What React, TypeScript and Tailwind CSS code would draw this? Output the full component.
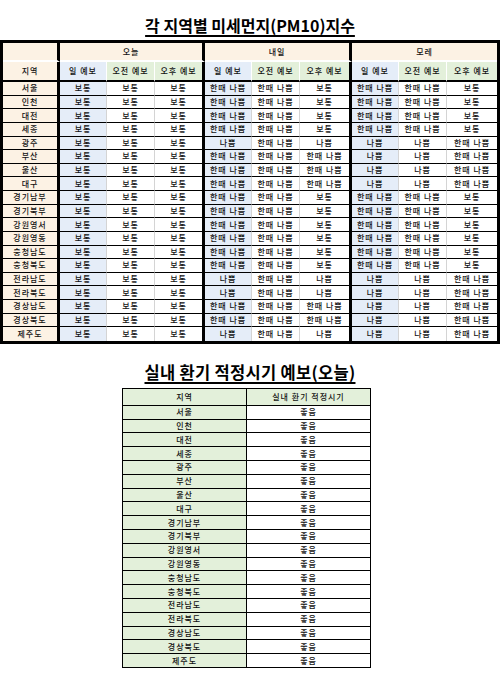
import React from "react";

const REGIONS = [
  "서울", "인천", "대전", "세종", "광주", "부산", "울산", "대구",
  "경기남부", "경기북부", "강원영서", "강원영동", "충청남도", "충청북도",
  "전라남도", "전라북도", "경상남도", "경상북도", "제주도",
];

const A = "한때 나쁨";
const B = "나쁨";
const N = "보통";

// 내일/모레 pattern: "north" type vs "south" type
const NORTH_TMR = [A, A, N];
const NORTH_DAT = [A, A, N];
const SOUTH_TMR = [B, A, B];
const EAST_TMR = [A, A, A];
const SOUTH_DAT = [B, B, A];

const FORECAST: Record<string, string[]> = {
  서울: [...NORTH_TMR, ...NORTH_DAT],
  인천: [...NORTH_TMR, ...NORTH_DAT],
  대전: [...NORTH_TMR, ...NORTH_DAT],
  세종: [...NORTH_TMR, ...NORTH_DAT],
  광주: [...SOUTH_TMR, ...SOUTH_DAT],
  부산: [...EAST_TMR, ...SOUTH_DAT],
  울산: [...EAST_TMR, ...SOUTH_DAT],
  대구: [...EAST_TMR, ...SOUTH_DAT],
  경기남부: [...NORTH_TMR, ...NORTH_DAT],
  경기북부: [...NORTH_TMR, ...NORTH_DAT],
  강원영서: [...NORTH_TMR, ...NORTH_DAT],
  강원영동: [...NORTH_TMR, ...NORTH_DAT],
  충청남도: [...NORTH_TMR, ...NORTH_DAT],
  충청북도: [...NORTH_TMR, ...NORTH_DAT],
  전라남도: [...SOUTH_TMR, ...SOUTH_DAT],
  전라북도: [...SOUTH_TMR, ...SOUTH_DAT],
  경상남도: [...EAST_TMR, ...SOUTH_DAT],
  경상북도: [...EAST_TMR, ...SOUTH_DAT],
  제주도: [...SOUTH_TMR, ...SOUTH_DAT],
};

const FONT = { fontFamily: '"Noto Sans CJK KR", "Noto Sans", sans-serif' };

// cell widths (border-box), sums to 494
const WIDTHS = ["w-[57px]", "w-[47px]", "w-[48px]", "w-[50px]", "w-[47px]", "w-[48px]", "w-[52px]", "w-[47px]", "w-[48px]", "w-[50px]"];

function DustTable() {
  const cell = "text-center align-middle p-0 whitespace-nowrap overflow-hidden";
  return (
    <table className="w-[500px] table-fixed border-separate border-spacing-0 border-[3px] border-black text-[8px] leading-none text-[#111] tracking-[1px]">
      <colgroup>
        {WIDTHS.map((w, i) => (
          <col key={i} className={w} />
        ))}
      </colgroup>
      <thead>
        <tr className="h-[19px]">
          <th className={`${cell} bg-[#fcf2e4] border-b-2 border-b-white border-r-[3px] border-r-black`} />
          {["오늘", "내일", "모레"].map((g, i) => (
            <th
              key={g}
              colSpan={3}
              className={`${cell} font-medium bg-[#fcf2e4] border-b-2 border-b-white ${i < 2 ? "border-r-[3px] border-r-black" : ""}`}
            >
              {g}
            </th>
          ))}
        </tr>
        <tr className="h-[20px]">
          <th className={`${cell} font-medium bg-[#fcf2e4] border-b-2 border-b-black border-r-[3px] border-r-black`}>지역</th>
          {[0, 1, 2].map((g) => (
            <React.Fragment key={g}>
              <th className={`${cell} font-medium bg-[#e5edf8] border-b-2 border-b-black border-r border-r-white`}>일 예보</th>
              <th className={`${cell} font-medium bg-[#e3f0da] border-b-2 border-b-black border-r border-r-white`}>오전 예보</th>
              <th
                className={`${cell} font-medium bg-[#e3f0da] border-b-2 border-b-black ${g < 2 ? "border-r-[3px] border-r-black" : ""}`}
              >
                오후 예보
              </th>
            </React.Fragment>
          ))}
        </tr>
      </thead>
      <tbody>
        {REGIONS.map((r, ri) => {
          const last = ri === REGIONS.length - 1;
          const bb = last ? "" : "border-b border-b-black";
          const vals = [N, N, N, ...FORECAST[r]];
          return (
            <tr key={r} className="h-[13.63px]">
              <td className={`${cell} font-medium bg-[#fcf2e4] ${bb} border-r-[3px] border-r-black`}>{r}</td>
              {vals.map((v, i) => {
                const pos = i % 3;
                const bg = pos === 0 ? "bg-[#e5edf8]" : "bg-white";
                const br =
                  pos === 2
                    ? i < 8
                      ? "border-r-[3px] border-r-black"
                      : ""
                    : "border-r border-r-[#d4d4d4]";
                return (
                  <td key={i} className={`${cell} font-medium ${bg} ${bb} ${br}`}>
                    {v}
                  </td>
                );
              })}
            </tr>
          );
        })}
      </tbody>
    </table>
  );
}

function VentTable() {
  const cell = "text-center align-middle p-0 whitespace-nowrap border-black";
  return (
    <table className="w-[248px] table-fixed border-collapse text-[8px] leading-none text-[#111] tracking-[1px]">
      <colgroup>
        <col className="w-[124px]" />
        <col className="w-[124px]" />
      </colgroup>
      <thead>
        <tr className="h-[17px]">
          <th className={`${cell} font-medium border border-black bg-[#e3f0da]`}>지역</th>
          <th className={`${cell} font-medium border border-black bg-[#e3f0da]`}>실내 환기 적정시기</th>
        </tr>
      </thead>
      <tbody>
        {REGIONS.map((r) => (
          <tr key={r} className="h-[13.8px]">
            <td className={`${cell} font-medium border border-black bg-[#e3f0da]`}>{r}</td>
            <td className={`${cell} font-medium border border-black bg-white`}>좋음</td>
          </tr>
        ))}
      </tbody>
    </table>
  );
}

export default function App() {
  return (
    <div className="w-[500px] h-[685px] bg-white overflow-hidden" style={FONT}>
      <div className="h-[40px] pt-[13px] text-center">
        <span className="text-[16px] leading-[20px] font-bold text-black underline underline-offset-[3px] decoration-[1.5px]">
          각 지역별 미세먼지(PM10)지수
        </span>
      </div>
      <DustTable />
      <div className="h-[44px] pt-[16px] text-center">
        <span className="text-[16.5px] leading-[20px] font-bold text-black underline underline-offset-[3px] decoration-[1.5px] tracking-[0.3px]">
          실내 환기 적정시기 예보(오늘)
        </span>
      </div>
      <div className="flex pl-[122px]">
        <VentTable />
      </div>
    </div>
  );
}
